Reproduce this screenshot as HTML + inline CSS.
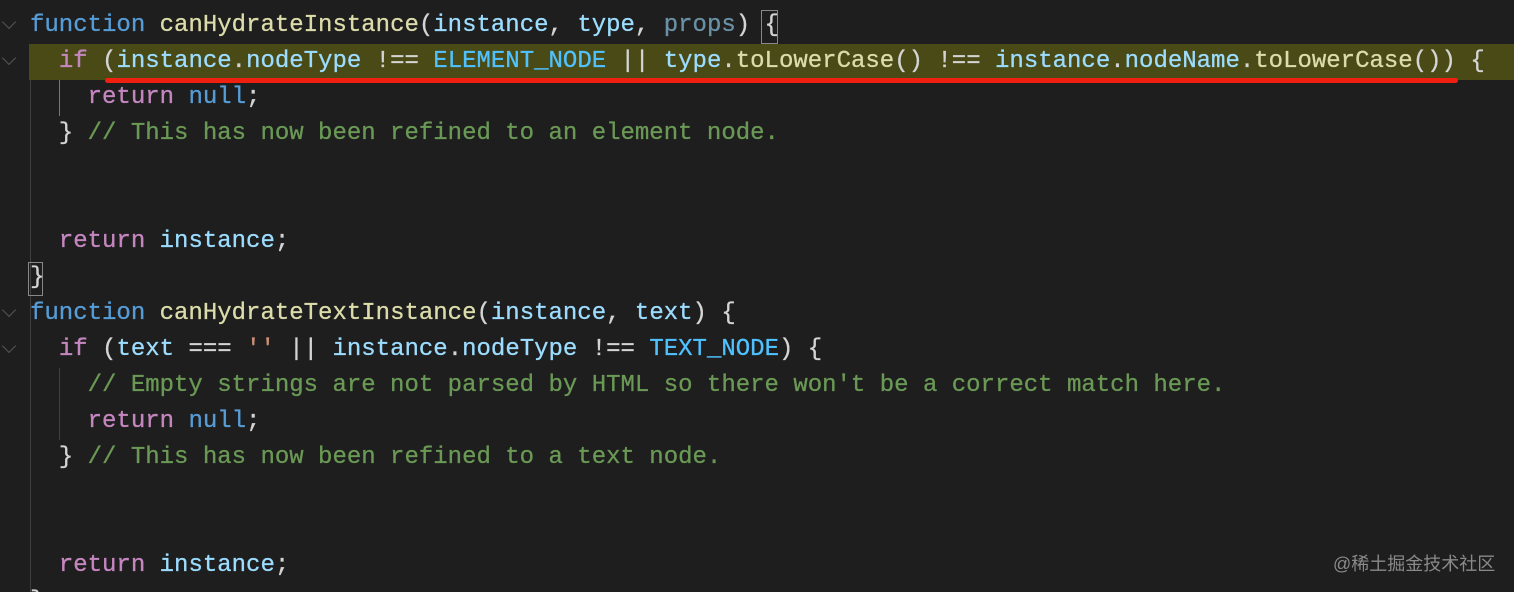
<!DOCTYPE html>
<html><head><meta charset="utf-8"><style>
html,body{margin:0;padding:0;background:#1e1e1e;width:1514px;height:592px;overflow:hidden;position:relative}
.code{position:absolute;left:30px;top:8px;margin:0;font-family:"Liberation Mono",monospace;font-size:24px;line-height:36px;color:#d4d4d4;white-space:pre;-webkit-text-stroke:0.3px currentColor}
.k{color:#569cd6}.f{color:#dcdcaa}.p{color:#9cdcfe}.c{color:#c586c0}.cm{color:#6a9955}.s{color:#ce9178}.n{color:#4fc1ff}.d{color:#9cdcfe;opacity:.6}
.hl{position:absolute;left:29px;top:44px;width:1485px;height:36px;background:#4a4a17}
.red{position:absolute;left:105px;top:78px;width:1353px;height:5px;background:#f02010;border-radius:3px}
.g{position:absolute;width:1px;background:#404040}
.box{position:absolute;border:1px solid #888;}
.chev{position:absolute;left:4px;width:9px;height:9px;border-right:1.5px solid #555;border-bottom:1.5px solid #555;transform:rotate(45deg)}
.wm{position:absolute;left:1333px;top:550px;font-family:"Liberation Sans","Noto Sans CJK SC",sans-serif;font-size:18px;color:#8a8a8a}
</style></head><body>
<div class="hl"></div>
<div class="g" style="left:30px;top:80px;height:512px"></div>
<div class="g" style="left:59px;top:80px;height:36px;background:#777"></div>
<div class="g" style="left:30px;top:332px;height:260px"></div>
<div class="g" style="left:59px;top:368px;height:72px"></div>
<div class="box" style="left:761px;top:10px;width:15px;height:32px"></div>
<div class="box" style="left:28px;top:262px;width:13px;height:32px"></div>
<div class="chev" style="top:17px"></div>
<div class="chev" style="top:53px"></div>
<div class="chev" style="top:305px"></div>
<div class="chev" style="top:341px"></div>
<pre class="code"><span class="k">function</span> <span class="f">canHydrateInstance</span>(<span class="p">instance</span>, <span class="p">type</span>, <span class="d">props</span>) {
  <span class="c">if</span> (<span class="p">instance</span>.<span class="p">nodeType</span> !== <span class="n">ELEMENT_NODE</span> || <span class="p">type</span>.<span class="f">toLowerCase</span>() !== <span class="p">instance</span>.<span class="p">nodeName</span>.<span class="f">toLowerCase</span>()) {
    <span class="c">return</span> <span class="k">null</span>;
  } <span class="cm">// This has now been refined to an element node.</span>


  <span class="c">return</span> <span class="p">instance</span>;
}
<span class="k">function</span> <span class="f">canHydrateTextInstance</span>(<span class="p">instance</span>, <span class="p">text</span>) {
  <span class="c">if</span> (<span class="p">text</span> === <span class="s">''</span> || <span class="p">instance</span>.<span class="p">nodeType</span> !== <span class="n">TEXT_NODE</span>) {
    <span class="cm">// Empty strings are not parsed by HTML so there won't be a correct match here.</span>
    <span class="c">return</span> <span class="k">null</span>;
  } <span class="cm">// This has now been refined to a text node.</span>


  <span class="c">return</span> <span class="p">instance</span>;
}</pre>
<div class="red"></div>
<div class="wm">@稀土掘金技术社区</div>
</body></html>
